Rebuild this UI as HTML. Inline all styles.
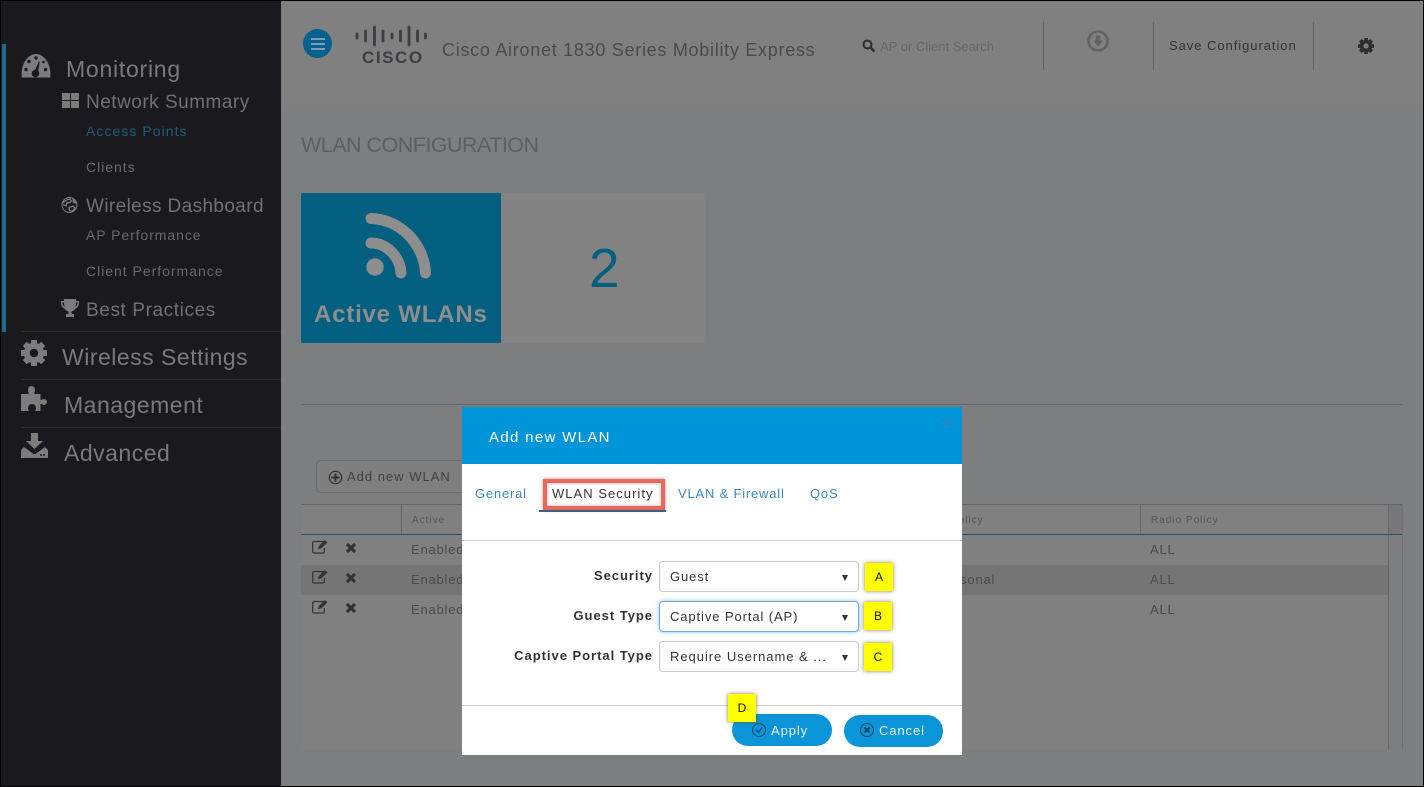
<!DOCTYPE html>
<html>
<head>
<meta charset="utf-8">
<style>
html,body{margin:0;padding:0;background:#000}
#p{position:relative;width:1424px;height:787px;overflow:hidden;background:#000;font-family:"Liberation Sans",sans-serif}
#p div,#p span,#p svg{position:absolute}
.t{white-space:nowrap;line-height:1}
.s1{color:#7a7a7c;font-size:23px;letter-spacing:.5px}
.s2{color:#717173;font-size:19px;letter-spacing:.5px}
.s3{color:#69696b;font-size:14px;letter-spacing:.98px}
.c{color:#4a4a4c;font-size:13px;letter-spacing:.8px}
.h{color:#545456;font-size:10px;letter-spacing:1px}
.lab{color:#333;font-size:13px;font-weight:bold;letter-spacing:.97px;right:771px}
.sel{left:659px;width:198px;height:29px;background:#fff;border:1px solid #c9c9c9;border-radius:4px}
.v{left:670px;color:#333;font-size:13px;letter-spacing:.9px}
.tab{color:#3b87bd;font-size:13px;letter-spacing:.8px}
.y{background:#ffff00;box-shadow:0 0 4px rgba(90,90,0,.75);color:#111;font-size:12px;text-align:center;line-height:28px;height:28px}
.arr{left:842px;width:0;height:0;border-left:3.5px solid transparent;border-right:3.5px solid transparent;border-top:6px solid #333}
.btn{height:32px;background:#0b95d8;border-radius:17px}
</style>
</head>
<body>
<div id="p">
<!-- sidebar -->
<div style="left:1px;top:1px;width:280px;height:785px;background:#1a1a1e"></div>
<div style="left:2px;top:44px;width:4px;height:288px;background:#1c6a8b"></div>
<div style="left:21px;top:331px;width:260px;height:1px;background:#2e2e32"></div>
<div style="left:21px;top:379px;width:260px;height:1px;background:#2e2e32"></div>
<div style="left:21px;top:427px;width:260px;height:1px;background:#2e2e32"></div>

<svg style="left:21px;top:54px" width="30" height="24" viewBox="0 0 30 24"><path fill="#7c7c7c" d="M.8 23.500C-.8 11 6.500 0 15 0s15.800 11 14.200 23.500z"/><g fill="#1a1a1e"><circle cx="5" cy="15.500" r="1.700"/><circle cx="8" cy="7.500" r="1.700"/><circle cx="15" cy="4" r="1.700"/><circle cx="24.500" cy="15.500" r="1.700"/><circle cx="22.500" cy="8" r="1.300"/><circle cx="14.500" cy="19.500" r="3.800"/><path d="M13 18.500L17.800 7.500l1 .4L16.500 20z"/></g></svg>
<span class="t s1" style="left:66px;top:58px;letter-spacing:.75px">Monitoring</span>

<svg style="left:62px;top:93px" width="17" height="15" viewBox="0 0 17 15"><path fill="#7c7c7c" d="M0 0h8v7H0zM9 0h8v7H9zM0 8h8v7H0zM9 8h8v7H9z"/></svg>
<span class="t s2" style="left:86px;top:93px">Network Summary</span>
<span class="t s3" style="left:86px;top:124px;color:#1f5d7c;letter-spacing:1.05px">Access Points</span>
<span class="t s3" style="left:86px;top:160px">Clients</span>

<svg style="left:61px;top:196px" width="17" height="18" viewBox="0 0 17 18"><circle cx="8.500" cy="9" r="7.500" fill="none" stroke="#7c7c7c" stroke-width="1"/><path fill="none" stroke="#7c7c7c" stroke-width="1.300" d="M2 7C4 4 7 3.500 9 3l1.500 2L8 7 6 6.500 5 10 2 8.500M8 11.500l4-1.500 2 2-3 3.500-2.500-1zM12 3.500l3 3.500-2.500-.5z"/></svg>
<span class="t s2" style="left:86px;top:197px;letter-spacing:.38px">Wireless Dashboard</span>
<span class="t s3" style="left:86px;top:228px;letter-spacing:.93px">AP Performance</span>
<span class="t s3" style="left:86px;top:264px">Client Performance</span>

<svg style="left:61px;top:299px" width="18" height="19" viewBox="0 0 18 19"><path fill="#7c7c7c" d="M3 0h12v2h3v2c0 3-2 5-4 6-1 1.500-2 2-3.500 2.500V15H13v3H5v-3h2.500v-2.500C6 12 5 11.500 4 10 2 9 0 7 0 4V2h3zM1.500 3.500V4c0 1.500 1 3 2 4L3 3.500zM16.500 3.500H15L14.500 8c1-1 2-2.500 2-4z"/></svg>
<span class="t s2" style="left:86px;top:301px;letter-spacing:.6px">Best Practices</span>

<svg style="left:21px;top:340px" width="26" height="26" viewBox="0 0 26 26"><circle cx="13" cy="13" r="7.200" fill="none" stroke="#7c7c7c" stroke-width="6"/><g fill="#7c7c7c"><rect x="10" y="0" width="6" height="6" rx=".8"/><rect x="10" y="0" width="6" height="6" rx=".8" transform="rotate(45 13 13)"/><rect x="10" y="0" width="6" height="6" rx=".8" transform="rotate(90 13 13)"/><rect x="10" y="0" width="6" height="6" rx=".8" transform="rotate(135 13 13)"/><rect x="10" y="0" width="6" height="6" rx=".8" transform="rotate(180 13 13)"/><rect x="10" y="0" width="6" height="6" rx=".8" transform="rotate(225 13 13)"/><rect x="10" y="0" width="6" height="6" rx=".8" transform="rotate(270 13 13)"/><rect x="10" y="0" width="6" height="6" rx=".8" transform="rotate(315 13 13)"/></g></svg>
<span class="t s1" style="left:62px;top:346px">Wireless Settings</span>

<svg style="left:21px;top:385px" width="28" height="27" viewBox="0 0 28 27"><path fill="#7c7c7c" d="M0 9h7.500C8 8 7 7 7 4.500a3.500 3.500 0 0 1 7 0C14 7 13 8 13.500 9H19.500v6c1 .5 1.500-1 3.500-1a3 3 0 0 1 0 6c-2 0-2.500-1.500-3.500-1v7H14c.5-1 1-1.500 1-3a4 4 0 0 0-8 0c0 1.500.5 2 1 3H0z"/></svg>
<span class="t s1" style="left:64px;top:394px">Management</span>

<svg style="left:21px;top:433px" width="28" height="26" viewBox="0 0 28 26"><path fill="#7c7c7c" d="M10 0h7v8h5l-8.500 8L5 8h5z"/><path fill="#7c7c7c" d="M0 17l3-3 9.500 7h2l9.500-7 3 3v8H0z"/><circle cx="20" cy="22" r="1" fill="#1a1a1e"/><circle cx="23" cy="22" r="1" fill="#1a1a1e"/></svg>
<span class="t s1" style="left:64px;top:442px">Advanced</span>

<!-- main -->
<div style="left:281px;top:1px;width:1142px;height:785px;background:#7d7e80"></div>
<div style="left:281px;top:1px;width:1142px;height:104px;background:#808080"></div>

<!-- header -->
<div style="left:303px;top:29px;width:29px;height:29px;border-radius:50%;background:#04608c"></div>
<div style="left:311px;top:38px;width:14px;height:2px;background:#7a9fb2"></div>
<div style="left:311px;top:43px;width:14px;height:2px;background:#7a9fb2"></div>
<div style="left:311px;top:48px;width:14px;height:2px;background:#7a9fb2"></div>

<svg style="left:354px;top:24px" width="78" height="24" viewBox="0 0 78 24"><g stroke="#3d3d42" stroke-width="2.800" stroke-linecap="round"><path d="M3 10v4M11.500 7v10M20.500 3v18M29 7v10M38 10v4M46.500 7v10M55 3v18M63.500 7v10M71.500 10v4"/></g></svg>
<span class="t" style="left:362px;top:49px;color:#3d3d42;font-size:17px;font-weight:bold;letter-spacing:1.55px">CISCO</span>
<span class="t" style="left:442px;top:41px;color:#4a4a4e;font-size:18px;letter-spacing:.72px">Cisco Aironet 1830 Series Mobility Express</span>

<svg style="left:862px;top:39px" width="14" height="14" viewBox="0 0 14 14"><circle cx="5.500" cy="5.500" r="4" fill="none" stroke="#2c2c2e" stroke-width="2"/><path d="M8.500 8.500L12.500 12.500" stroke="#2c2c2e" stroke-width="2.400"/></svg>
<span class="t" style="left:880px;top:40px;color:#666668;font-size:13px">AP or Client Search</span>
<div style="left:1043px;top:22px;width:1px;height:48px;background:#636365"></div>
<svg style="left:1086px;top:29px" width="24" height="24" viewBox="0 0 24 24"><circle cx="12" cy="12" r="9.500" fill="none" stroke="#636365" stroke-width="2.600"/><path fill="#636365" d="M9.800 6.500h4.400v5H17l-5 6-5-6h2.800z"/></svg>
<div style="left:1153px;top:22px;width:1px;height:48px;background:#636365"></div>
<span class="t" style="left:1169px;top:39px;color:#333335;font-size:13px;letter-spacing:.95px">Save Configuration</span>
<div style="left:1313px;top:22px;width:1px;height:48px;background:#636365"></div>
<svg style="left:1358px;top:38px" width="16" height="16" viewBox="0 0 26 26"><circle cx="13" cy="13" r="7.200" fill="none" stroke="#2e2e30" stroke-width="6"/><g fill="#2e2e30"><rect x="10" y="0" width="6" height="6"/><rect x="10" y="0" width="6" height="6" transform="rotate(45 13 13)"/><rect x="10" y="0" width="6" height="6" transform="rotate(90 13 13)"/><rect x="10" y="0" width="6" height="6" transform="rotate(135 13 13)"/><rect x="10" y="0" width="6" height="6" transform="rotate(180 13 13)"/><rect x="10" y="0" width="6" height="6" transform="rotate(225 13 13)"/><rect x="10" y="0" width="6" height="6" transform="rotate(270 13 13)"/><rect x="10" y="0" width="6" height="6" transform="rotate(315 13 13)"/></g></svg>

<!-- page title -->
<span class="t" style="left:301px;top:135px;color:#5e5e60;font-size:21.500px;letter-spacing:-.52px">WLAN CONFIGURATION</span>

<!-- tile -->
<div style="left:301px;top:193px;width:200px;height:150px;background:#025f80"></div>
<div style="left:501px;top:193px;width:205px;height:150px;background:#828282"></div>
<svg style="left:360px;top:208px" width="74" height="72" viewBox="0 0 74 72"><g fill="none" stroke="#8e8e8e" stroke-linejoin="round"><path stroke-width="11" stroke-linecap="round" d="M11 10.500C39 11 64 35 65.500 65"/><path stroke-width="11" stroke-linecap="round" d="M11 35C26 35 40 48 41 65"/></g><circle cx="15" cy="59" r="8.700" fill="#8e8e8e"/></svg>
<span class="t" style="left:314px;top:303px;color:#8e8e8e;font-size:24px;font-weight:bold;letter-spacing:.8px">Active WLANs</span>
<span class="t" style="left:589px;top:241px;color:#035f80;font-size:55px">2</span>

<div style="left:301px;top:404px;width:1102px;height:1px;background:#656567"></div>

<!-- add button -->
<div style="left:316px;top:460px;width:160px;height:31px;border:1px solid #6a6a6c;border-radius:5px;background:#7f7f7f"></div>
<svg style="left:328px;top:470px" width="15" height="15" viewBox="0 0 15 15"><circle cx="7.500" cy="7.500" r="6.200" fill="none" stroke="#2f2f31" stroke-width="1.200"/><path d="M7.500 3.500v8M3.500 7.500h8" stroke="#2f2f31" stroke-width="2"/></svg>
<span class="t c" style="left:347px;top:470px;color:#414143;letter-spacing:1px">Add new WLAN</span>

<!-- table -->
<div style="left:301px;top:505px;width:1087px;height:245px;background:#808080"></div>
<div style="left:1388px;top:505px;width:14px;height:29px;background:#777779"></div>
<div style="left:301px;top:504px;width:1101px;height:1px;background:#656567"></div>
<div style="left:301px;top:534px;width:1102px;height:1px;background:#23536b"></div>
<div style="left:301px;top:565px;width:1087px;height:30px;background:#757575"></div>
<div style="left:401px;top:505px;width:1px;height:29px;background:#656567"></div>
<div style="left:1140px;top:505px;width:1px;height:29px;background:#656567"></div>
<div style="left:1388px;top:505px;width:1px;height:245px;background:#68686a"></div>
<div style="left:1402px;top:505px;width:1px;height:245px;background:#727274"></div>
<span class="t h" style="left:412px;top:516px">Active</span>
<span class="t h" style="left:951px;top:516px">Policy</span>
<span class="t h" style="left:1151px;top:516px">Radio Policy</span>

<span class="t c" style="left:411px;top:543px">Enabled</span>
<span class="t c" style="left:411px;top:573px">Enabled</span>
<span class="t c" style="left:411px;top:603px">Enabled</span>
<span class="t c" style="left:1150px;top:543px">ALL</span>
<span class="t c" style="left:1150px;top:573px">ALL</span>
<span class="t c" style="left:1150px;top:603px">ALL</span>
<span class="t c" style="left:955px;top:573px">rsonal</span>

<svg style="left:312px;top:539px" width="17" height="15" viewBox="0 0 17 15"><path fill="none" stroke="#333" stroke-width="1.200" d="M11 5v-2.500H2a1.300 1.300 0 0 0-1.300 1.300v8.900A1.300 1.300 0 0 0 2 14h9a1.300 1.300 0 0 0 1.300-1.300V9"/><path fill="#333" d="M6 10l.8-3L13 1l2.500 2.500L9 9.500z"/></svg>
<svg style="left:312px;top:569px" width="17" height="15" viewBox="0 0 17 15"><path fill="none" stroke="#333" stroke-width="1.200" d="M11 5v-2.500H2a1.300 1.300 0 0 0-1.300 1.300v8.900A1.300 1.300 0 0 0 2 14h9a1.300 1.300 0 0 0 1.300-1.300V9"/><path fill="#333" d="M6 10l.8-3L13 1l2.500 2.500L9 9.500z"/></svg>
<svg style="left:312px;top:599px" width="17" height="15" viewBox="0 0 17 15"><path fill="none" stroke="#333" stroke-width="1.200" d="M11 5v-2.500H2a1.300 1.300 0 0 0-1.300 1.300v8.900A1.300 1.300 0 0 0 2 14h9a1.300 1.300 0 0 0 1.300-1.300V9"/><path fill="#333" d="M6 10l.8-3L13 1l2.500 2.500L9 9.500z"/></svg>
<svg style="left:345px;top:542px" width="12" height="12" viewBox="0 0 12 12"><path d="M2 2l8 8M10 2l-8 8" stroke="#333" stroke-width="3.200"/></svg>
<svg style="left:345px;top:572px" width="12" height="12" viewBox="0 0 12 12"><path d="M2 2l8 8M10 2l-8 8" stroke="#333" stroke-width="3.200"/></svg>
<svg style="left:345px;top:602px" width="12" height="12" viewBox="0 0 12 12"><path d="M2 2l8 8M10 2l-8 8" stroke="#333" stroke-width="3.200"/></svg>

<!-- modal -->
<div style="left:462px;top:407px;width:500px;height:348px;background:#fff"></div>
<div style="left:462px;top:407px;width:500px;height:57px;background:#0095d9"></div>
<span class="t" style="left:489px;top:430px;color:#fff;font-size:15px;letter-spacing:1.33px">Add new WLAN</span>
<svg style="left:942px;top:417px" width="10" height="10" viewBox="0 0 10 10"><path d="M1 1l8 8M9 1l-8 8" stroke="#3a7ea6" stroke-width="1"/></svg>

<span class="t tab" style="left:475px;top:487px">General</span>
<div style="left:539px;top:510px;width:127px;height:2px;background:#2c6b94"></div>
<div style="left:543px;top:479px;width:114px;height:23px;border:4px solid #e8695c;box-shadow:0 0 3px rgba(120,60,50,.6),inset 0 0 3px rgba(120,60,50,.45)"></div>
<span class="t tab" style="left:552px;top:487px;color:#333;letter-spacing:1.03px">WLAN Security</span>
<span class="t tab" style="left:678px;top:487px">VLAN &amp; Firewall</span>
<span class="t tab" style="left:810px;top:487px">QoS</span>
<div style="left:462px;top:540px;width:500px;height:1px;background:#cfcfcf"></div>

<span class="t lab" style="top:569px">Security</span>
<span class="t lab" style="top:609px">Guest Type</span>
<span class="t lab" style="top:649px">Captive Portal Type</span>

<div class="sel" style="top:561px"></div>
<div class="sel" style="top:601px;border-color:#6aaedb;box-shadow:0 0 4px rgba(80,170,230,.7)"></div>
<div class="sel" style="top:641px"></div>
<span class="t v" style="top:570px">Guest</span>
<span class="t v" style="top:610px">Captive Portal (AP)</span>
<span class="t v" style="top:650px;letter-spacing:.96px">Require Username &amp; ...</span>
<div class="arr" style="top:575px"></div>
<div class="arr" style="top:615px"></div>
<div class="arr" style="top:655px"></div>

<div class="y" style="left:865px;top:563px;width:28px">A</div>
<div class="y" style="left:864px;top:602px;width:28px">B</div>
<div class="y" style="left:864px;top:643px;width:28px">C</div>

<div style="left:462px;top:705px;width:500px;height:1px;background:#cfcfcf"></div>

<div class="btn" style="left:732px;top:714px;width:100px"></div>
<div class="btn" style="left:844px;top:715px;width:99px"></div>
<svg style="left:751px;top:722px" width="16" height="16" viewBox="0 0 16 16"><circle cx="8" cy="8" r="6.500" fill="none" stroke="#0c4a68" stroke-width="1.100"/><path d="M5 8l2.300 2.500L11 5.500" fill="none" stroke="#0c4a68" stroke-width="1.300"/></svg>
<span class="t" style="left:771px;top:724px;color:#e6f6ff;font-size:13px;letter-spacing:.9px">Apply</span>
<svg style="left:859px;top:722px" width="16" height="16" viewBox="0 0 16 16"><circle cx="8" cy="8" r="6.500" fill="none" stroke="#0c4a68" stroke-width="1.100"/><path d="M5.500 5.500l5 5M10.500 5.500l-5 5" stroke="#0c4a68" stroke-width="2"/></svg>
<span class="t" style="left:879px;top:724px;color:#e6f6ff;font-size:13px;letter-spacing:.9px">Cancel</span>
<div class="y" style="left:728px;top:694px;width:28px">D</div>
</div>
</body>
</html>
